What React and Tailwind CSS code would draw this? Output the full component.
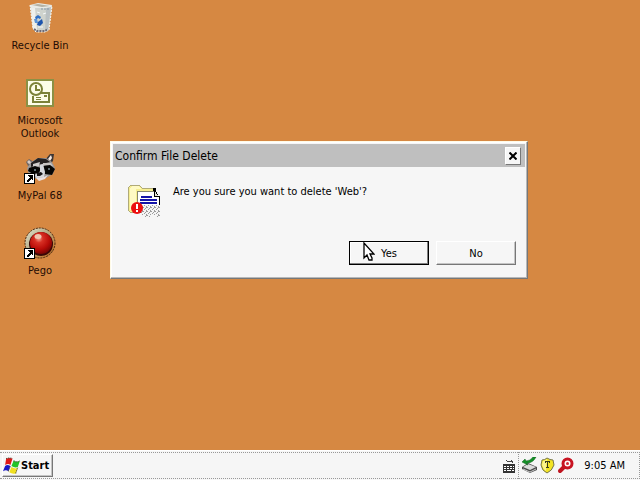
import { useState } from 'react';

/**
 * RecycleBinIcon component.
 */
const RecycleBinIcon = () => (
  <svg width="32" height="32" viewBox="0 0 32 32" aria-hidden="true">
    <path d="M6 3 L28 4 L25 28 L21 30 L12 30 L9 27 Z" fill="#cfd3cd" />
    <path d="M6 3 L14 1 L28 3 L27 7 L17 6 L7 6 Z" fill="#e9ebe6" />
    <path d="M8 3 L14 2 L26 4 L18 5 Z" fill="#b4b2a4" />
    <path d="M7 6 L11 6 L13 28 L9 27 Z" fill="#eef0ec" />
    <path d="M22 6 L27 5 L24 27 L21 29 Z" fill="#b9c0c2" />
    <path d="M6 3 L9 27 L12 30 L21 30 L25 28 L28 4" fill="none" stroke="#f7f7f2" strokeDasharray="2 1" />
    <path d="M17 7 H26" stroke="#8398a6" strokeDasharray="2 1" />
    <path d="M11 15 l3 -2 l3 2 l-1 2 l-2 -1 l-2 2 Z" fill="#2f6fc4" />
    <path d="M10 17 l3 0 l1 4 l-3 0 Z" fill="#5b94d8" />
    <path d="M14 20 l4 -3 l1 4 l-3 3 l-3 -1 Z" fill="#1d54ad" />
    <path d="M13 10 l3 1 M19 12 l3 -1 M14 25 l5 0" stroke="#f5f8fa" />
    <path d="M10 27 L13 29 L21 29 L24 27" fill="none" stroke="#6f6a75" strokeWidth="2" strokeDasharray="2 1" />
  </svg>
);

/**
 * OutlookIcon component.
 */
const OutlookIcon = () => (
  <svg width="32" height="32" viewBox="0 0 32 32" aria-hidden="true">
    <rect x="2" y="2" width="28" height="28" fill="#8b9145" />
    <rect x="4" y="4" width="24" height="24" fill="#fdfde8" />
    <path d="M17 16 H25 V25 H9 V19" fill="none" stroke="#7c8238" strokeWidth="2" />
    <circle cx="12" cy="12" r="6" fill="#fdfde8" stroke="#7c8238" strokeWidth="2" />
    <path d="M12 8 V13 H16" fill="none" stroke="#7c8238" strokeWidth="2" />
    <rect x="20" y="18" width="3" height="2" fill="#7c8238" />
    <path d="M12 20.5 H17 M12 22.5 H17" stroke="#7c8238" />
  </svg>
);

/**
 * ShortcutArrow component.
 */
const ShortcutArrow = () => (
  <g shapeRendering="crispEdges">
    <rect x="0" y="21" width="11" height="11" fill="#000" />
    <rect x="1" y="22" width="9" height="9" fill="#fff" />
    <path d="M4 23 H9 V28 H8 V27 H7 V28 H6 V29 H5 V30 H3 V28 H4 V27 H5 V26 H6 V25 H5 V24 H4 Z" fill="#000" />
  </g>
);

/**
 * RaccoonIcon component.
 */
const RaccoonIcon = () => (
  <svg width="32" height="32" viewBox="0 0 32 32" aria-hidden="true">
    <path d="M2 10 L5 7 L10 10 L9 14 L4 14 Z" fill="#6d6563" />
    <path d="M3 10 L5 8 L8 11 L5 12 Z" fill="#d9c9c0" />
    <path d="M21 8 L26 2 L30 2 L29 9 L26 12 Z" fill="#3d3634" />
    <path d="M24 7 L27 3 L28 6 L26 9 Z" fill="#f2e6e0" />
    <path d="M3 16 L7 10 L14 6 L22 6 L28 10 L31 16 L29 22 L22 26 L13 27 L5 23 Z" fill="#9c9898" />
    <path d="M7 11 L14 6 L22 7 L26 10 L18 12 L12 13 L7 15 Z" fill="#242122" />
    <path d="M9 12 L16 10 L15 14 L9 16 Z" fill="#d0cecd" />
    <path d="M19 11 L27 11 L29 14 L22 13 L19 14 Z" fill="#c6c3c2" />
    <path d="M5 16 L11 14 L17 16 L15 21 L9 22 L4 19 Z" fill="#060606" />
    <path d="M19 14 L26 13 L31 17 L28 23 L21 22 Z" fill="#060606" />
    <path d="M16 13 L19 12 L21 20 L20 25 L12 26 L11 23 L16 20 Z" fill="#d5d7dd" />
    <path d="M13 21 L17 20 L19 22 L16 24 L13 24 Z" fill="#151316" />
    <path d="M12 26 L20 25 L24 23 L21 27 L15 29 Z" fill="#e8dfe2" />
    <path d="M10 18 h2 M24 17 h2" stroke="#b8d4df" />
    <ShortcutArrow />
  </svg>
);

/**
 * PegoIcon component.
 */
const PegoIcon = () => (
  <svg width="32" height="32" viewBox="0 0 32 32" aria-hidden="true">
    <defs>
      <radialGradient id="ball" cx="0.4" cy="0.3" r="0.75">
        <stop offset="0" stopColor="#f0a090" />
        <stop offset="0.25" stopColor="#d83024" />
        <stop offset="0.65" stopColor="#b80c08" />
        <stop offset="1" stopColor="#6c0404" />
      </radialGradient>
      <linearGradient id="ring" x1="0" y1="0" x2="1" y2="1">
        <stop offset="0" stopColor="#e4e6d4" />
        <stop offset="0.4" stopColor="#b8b08c" />
        <stop offset="0.8" stopColor="#c08038" />
        <stop offset="1" stopColor="#3b1a0c" />
      </linearGradient>
    </defs>
    <circle cx="16" cy="16" r="15" fill="url(#ring)" stroke="#4a2810" strokeDasharray="2 1" />
    <circle cx="17" cy="17" r="12" fill="#3a0806" />
    <circle cx="17" cy="16" r="11" fill="url(#ball)" />
    <ellipse cx="14" cy="9.5" rx="3.5" ry="2.5" fill="#f0c4b0" />
    <ShortcutArrow />
  </svg>
);

/**
 * DeleteFolderIcon component.
 */
const DeleteFolderIcon = () => (
  <svg width="34" height="35" viewBox="0 0 34 35" shapeRendering="crispEdges" aria-hidden="true">
    <defs>
      <pattern id="shred" width="4" height="4" patternUnits="userSpaceOnUse">
        <rect width="4" height="4" fill="#f4f4f4" />
        <path d="M0 0h1v1h-1z M2 1h1v1h-1z M1 2h1v1h-1z M3 3h1v1h-1z M3 0h1v1h-1z" fill="#9c9c9c" />
      </pattern>
    </defs>
    <path d="M1 5 L4 2 H12 L15 5 H27 V21 H16 V29 H3 L1 27 Z" fill="#f6ee90" stroke="#b0aa78" />
    <path d="M3 5 L5 3 H11 L14 6 H9 V27 H3 Z" fill="#fffac4" />
    <path d="M10 8 H27 L33 14 V23 H10 Z" fill="#fff" />
    <path d="M10 22 V8 H27" fill="none" stroke="#87876e" />
    <path d="M26 5 H29 V9 H30 V11 H31 V13 H33 V22 H32 V14 H27 V8 H26 Z" fill="#000" />
    <path d="M28 9 H29 V11 H30 V12 H31 V13 H28 Z" fill="#e4e4d8" />
    <path d="M14 14 H25 M13 17 H30 M13 20 H30" stroke="#1414a8" strokeWidth="1.4" />
    <path d="M14 22 H33 V34 H29 V32 H23 V34 H17 V32 H14 Z" fill="url(#shred)" />
    <g shapeRendering="auto">
      <circle cx="10" cy="25" r="6" fill="#ec1010" />
      <path d="M9 21 H11 V26 H9 Z M9 27 H11 V29 H9 Z" fill="#fff" />
    </g>
  </svg>
);

/**
 * FlagIcon component.
 */
const FlagIcon = () => (
  <svg width="18" height="18" viewBox="0 0 17 16" aria-hidden="true">
    <path d="M3 1 Q6 0 9 1 L7 7 Q5 5 2 7 Z" fill="#e01818" />
    <path d="M10 3 Q13 5 16 3 L14 9 Q11 10 8 8 Z" fill="#22c428" />
    <path d="M2 8 Q4 6 7 8 L5 13 Q3 11 0 13 Z" fill="#1818c8" />
    <path d="M8 9 Q11 11 14 10 L12 15 Q9 16 6 14 Z" fill="#f0e020" />
    <path d="M3 1 Q6 0 9 1 M10 3 Q13 5 16 3 M5 13 L7 8 M12 15 L14 9" fill="none" stroke="#40402c" strokeDasharray="1 1" />
  </svg>
);

/**
 * KeyboardIcon component.
 */
const KeyboardIcon = () => (
  <svg width="14" height="16" viewBox="0 0 14 16" shapeRendering="crispEdges" aria-hidden="true">
    <path d="M4 2h1v1h2v1h-2v-1h-1z M7 3h2v-1h1v1h1v2h-1v-1h-3z" fill="#444" />
    <path d="M1 6 H13 V15 H1 Z" fill="#333" />
    <path d="M2 8.5 H12 M2 10.5 H12" stroke="#fff" strokeDasharray="2 1" />
    <path d="M2 12.5 H4 M5 12.5 H9 M10 12.5 H12" stroke="#fff" />
  </svg>
);

/**
 * EjectIcon component.
 */
const EjectIcon = () => (
  <svg width="17" height="17" viewBox="0 0 17 17" aria-hidden="true">
    <path d="M1 10 L7 6 L16 10 V13 L9 16 L1 12 Z" fill="#4c4c4c" />
    <path d="M2 10 L7 7 L15 10 L9 13 Z" fill="#dcdcdc" />
    <path d="M2 12 L9 15 L15 12" fill="none" stroke="#c8c8c8" />
    <path d="M1 5 L4 2 L5 4 Q9 4 12 0 H15 Q12 6 6 6 L7 8 Z" fill="#159028" stroke="#0c5c18" strokeWidth="0.5" />
  </svg>
);

/**
 * ShieldIcon component.
 */
const ShieldIcon = () => (
  <svg width="15" height="17" viewBox="0 0 15 17" aria-hidden="true">
    <path d="M7 1 Q10 3 13 3 L14 8 Q12 14 7 16 Q2 14 1 8 L2 3 Q5 3 7 1 Z" fill="#f4e424" stroke="#77774c" />
    <path d="M7 2 Q5 4 3 4 L2 8 Q3 12 6 14 Z" fill="#fbf48c" />
    <path d="M5 4h5v2h-1v-1h-1v5h1v1h-3v-1h1v-5h-1v1h-1z" fill="#3c3c18" />
  </svg>
);

/**
 * MagnifierIcon component.
 */
const MagnifierIcon = () => (
  <svg width="17" height="17" viewBox="0 0 17 17" aria-hidden="true">
    <path d="M7 10 L3 14" stroke="#c01420" strokeWidth="4" strokeLinecap="round" />
    <circle cx="10.5" cy="6.5" r="4.5" fill="#fff" stroke="#c81422" strokeWidth="3" />
    <circle cx="10.5" cy="6.5" r="1.5" fill="#d42834" />
  </svg>
);

/**
 * CursorIcon component.
 */
const CursorIcon = () => (
  <svg width="13" height="20" viewBox="0 0 13 20" className="absolute left-3 top-0 z-10" aria-hidden="true">
    <path d="M2 1 V16 L5 13 L7 18 H10 V16 L8 12 H12 Z" fill="#fff" stroke="#000" strokeWidth="1.3" />
  </svg>
);

const desktopItems = [
  { label: 'Recycle Bin', icon: RecycleBinIcon },
  { label: 'Microsoft Outlook', icon: OutlookIcon },
  { label: 'MyPal 68', icon: RaccoonIcon },
  { label: 'Pego', icon: PegoIcon },
];

const trayItems = [
  { label: 'Safely Remove Hardware', icon: EjectIcon },
  { label: 'Security', icon: ShieldIcon },
  { label: 'Search', icon: MagnifierIcon },
];

/**
 * ConfirmDialog component.
 */
const ConfirmDialog = ({ onClose }) => (
  <div
    role="dialog"
    aria-labelledby="dialog-title"
    className="absolute left-[110px] top-[141px] w-[418px] border border-t-[#fffbe8] border-l-[#fffbe8] border-r-[#777] border-b-[#777] bg-[#f6f6f6] shadow-[inset_-1px_-1px_0_#b8b8b8,inset_1px_1px_0_#fff]"
  >
    {/* Title bar */}
    <div className="m-0.5 flex h-[23px] items-center justify-between bg-[#bfbfbf] pl-0.5 pr-1">
      <h1 id="dialog-title" className="text-xs">Confirm File Delete</h1>
      <button
        onClick={onClose}
        aria-label="Close"
        className="flex h-[18px] w-4 items-center justify-center border border-t-white border-l-white border-r-[#777] border-b-[#777] bg-[#f6f6f6]"
      >
        <svg width="8" height="8" viewBox="0 0 8 8" aria-hidden="true">
          <path d="M0.5 0.5 L7.5 7.5 M7.5 0.5 L0.5 7.5" stroke="#000" strokeWidth="2" />
        </svg>
      </button>
    </div>

    {/* Message */}
    <div className="flex gap-3 px-4 pt-3.5">
      <DeleteFolderIcon />
      <p className="pt-0.5">Are you sure you want to delete 'Web'?</p>
    </div>

    {/* Actions */}
    <div className="flex justify-end gap-[7px] pb-[13px] pr-[11px] pt-[23px]">
      <button
        onClick={onClose}
        className="relative h-6 w-20 border border-black bg-[#f6f6f6] shadow-[inset_-1px_-1px_0_#808080,inset_1px_1px_0_#fff]"
      >
        <CursorIcon />
        Yes
      </button>
      <button
        onClick={onClose}
        className="h-6 w-20 border border-t-white border-l-white border-r-[#777] border-b-[#777] bg-[#f6f6f6] shadow-[inset_-1px_-1px_0_#c4c4c4]"
      >
        No
      </button>
    </div>
  </div>
);

/**
 * App component.
 */
const App = () => {
  const [open, setOpen] = useState(true);

  return (
    <div className="flex h-screen flex-col overflow-hidden bg-[#d68842] font-['DejaVu_Sans_Condensed','DejaVu_Sans',sans-serif] text-[11px] leading-[13px] text-black">
      <main className="relative grow">
        {/* Desktop icons */}
        <ul className="flex w-20 flex-col">
          {desktopItems.map(({ label, icon: Icon }) => (
            <li key={label} className="h-[75px] pt-0.5">
              <a href="#" className="flex flex-col items-center gap-[5px] text-center text-[#240c04]">
                <Icon />
                <span className="px-1">{label}</span>
              </a>
            </li>
          ))}
        </ul>
        {open && <ConfirmDialog onClose={() => setOpen(false)} />}
      </main>

      {/* Taskbar */}
      <footer className="flex h-[30px] items-center justify-between border-t border-white bg-[#f6f6f6]">
        <div className="flex h-[27px] grow items-center border-y border-dotted border-[#999] pl-0.5">
          <button
            onClick={() => setOpen(true)}
            className="flex h-[23px] w-[51px] items-center border border-t-white border-l-white border-r-[#777] border-b-[#777] bg-[#f6f6f6] font-bold shadow-[inset_-1px_-1px_0_#c4c4c4]"
          >
            <FlagIcon />
            Start
          </button>
        </div>
        <div className="flex h-[27px] items-center border-y border-dotted border-[#999] px-0.5">
          <KeyboardIcon />
        </div>
        <div className="flex h-[27px] items-center gap-0.5 border border-dotted border-[#999] pl-0.5 pr-1.5">
          {trayItems.map(({ label, icon: Icon }) => (
            <span key={label} title={label}>
              <Icon />
            </span>
          ))}
          <time className="px-2">9:05 AM</time>
        </div>
      </footer>
    </div>
  );
};

export default App;
